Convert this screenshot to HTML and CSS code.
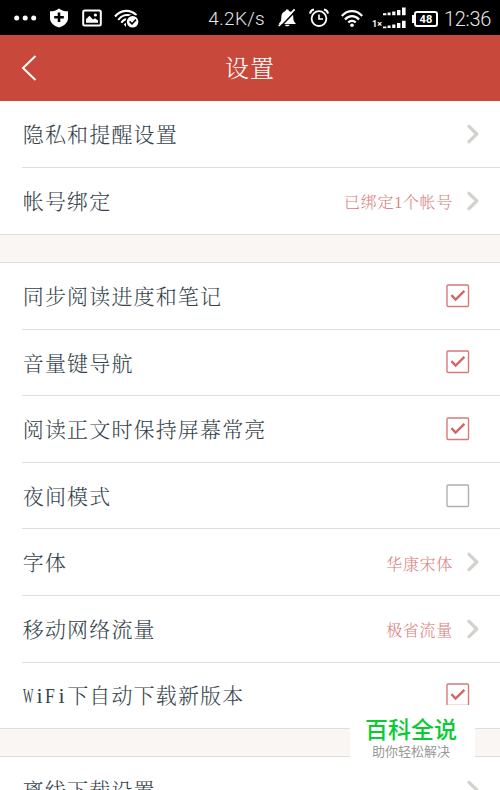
FILE: index.html
```html
<!DOCTYPE html>
<html lang="zh-CN">
<head>
  <meta charset="UTF-8" />
  <title>设置</title>
  <meta name="viewport" content="width=device-width, initial-scale=1.0" />
  <link rel="stylesheet" href="styles.css">
</head>
<body>

  <svg class="symbols" width="0" height="0">
    <symbol id="chevron" viewBox="0 0 12 20">
      <path d="M2 2.3 L9.8 10 L2 17.7" fill="none" stroke="#d3d1cc" stroke-width="3.2" stroke-linecap="round" stroke-linejoin="round"/>
    </symbol>
    <symbol id="tick" viewBox="0 0 24 24">
      <rect x="1" y="1" width="21.5" height="21.5" rx="1" fill="none" stroke="#d57b7b" stroke-width="1.4"/>
      <path d="M5.4 11.2 L9.6 15.5 L18.4 6.8" fill="none" stroke="#cc686b" stroke-width="2.4"/>
    </symbol>
    <symbol id="box" viewBox="0 0 24 24">
      <rect x="1" y="1" width="21.5" height="21.5" rx="1" fill="none" stroke="#b5afa8" stroke-width="1.4"/>
    </symbol>
  </svg>

  <div class="statusbar">
    <div class="status-left">
      <svg width="24" height="20" viewBox="0 0 24 20" fill="#fff">
        <circle cx="3.7" cy="10" r="2.5"/><circle cx="12.2" cy="10" r="2.5"/><circle cx="20.7" cy="10" r="2.5"/>
      </svg>
      <svg width="20" height="20" viewBox="0 0 20 20">
        <path d="M10 .4 C7.5 2.4 4.5 3.2 1 3.2 V10 C1 14.5 4.5 17.8 10 19.6 C15.5 17.8 19 14.5 19 10 V3.2 C15.5 3.2 12.5 2.4 10 .4Z" fill="#fff"/>
        <path d="M10 4.4 V14 M5.2 9.2 H14.8" stroke="#000" stroke-width="2.6"/>
      </svg>
      <svg width="20" height="20" viewBox="0 0 20 20">
        <rect x="1.2" y="2.4" width="17.6" height="15" rx="1.5" fill="none" stroke="#fff" stroke-width="2"/>
        <path d="M4 14.8 V11.2 L7.4 7.8 L11 11.6 L13 10.2 L16 12.6 V14.8Z" fill="#fff"/>
        <circle cx="13.4" cy="7" r="1.6" fill="#fff"/>
      </svg>
      <svg width="25" height="20" viewBox="0 0 25 20">
        <g fill="none" stroke="#fff" stroke-width="2.1">
          <path d="M1 8.5 C7 1.2 16.5 1.2 22.4 7.2"/>
          <path d="M4.2 11.8 C8 7 13.5 6 18 8.2"/>
          <path d="M7.4 14.8 C9 12.3 10.6 11.3 12.6 11.2"/>
        </g>
        <path d="M9.8 16.6 L12 14.6 V19Z" fill="#fff"/>
        <circle cx="18.6" cy="13.8" r="7" fill="#000"/>
        <circle cx="18.6" cy="13.8" r="5.8" fill="#fff"/>
        <path d="M15.6 13.4 L18 15.9 L22 11.6" fill="none" stroke="#000" stroke-width="1.6"/>
      </svg>
    </div>
    <div class="status-right">
      <span class="speed">4.2K/s</span>
      <svg class="bell" width="18" height="20" viewBox="0 0 18 20">
        <path d="M9.2 1.4 C10.4 1.4 10.8 2 10.9 3 C14.4 4 15.3 6.5 15.3 9.5 C15.3 12.5 16 14 17.7 15.4 V16 H1 V15.4 C2.8 14 3.3 12.5 3.3 9.5 C3.3 6.5 4.4 4 7.5 3 C7.6 2 8 1.4 9.2 1.4Z M7 16.8 H11.5 C11.2 18.8 7.4 18.8 7 16.8Z" fill="#fff"/>
        <path d="M2.2 19 L17.9 2.6" stroke="#000" stroke-width="1.6"/>
        <path d="M.8 18 L16.6 1.4" stroke="#fff" stroke-width="1.8"/>
      </svg>
      <svg class="alarm" width="20" height="20" viewBox="0 0 20 20" fill="none" stroke="#fff">
        <circle cx="10" cy="10.6" r="7.4" stroke-width="1.8"/>
        <path d="M10 6.4 V11 H14" stroke-width="1.6"/>
        <path d="M1 5.6 C1.4 3.4 2.8 2 5 1.6 M19 5.6 C18.6 3.4 17.2 2 15 1.6" stroke-width="2"/>
      </svg>
      <svg class="wifi" width="22" height="20" viewBox="0 0 22 20" fill="none" stroke="#fff" stroke-width="2.3">
        <path d="M.8 8 C6.5 1.5 15.5 1.5 21.2 8"/>
        <path d="M4 11.4 C8 6.9 14 6.9 18 11.4"/>
        <path d="M7.3 14.5 C9.5 12.2 12.5 12.2 14.7 14.5"/>
        <circle cx="11" cy="17.3" r="1.8" fill="#fff" stroke="none"/>
      </svg>
      <div class="signal">
        <span>1×</span>
        <svg width="24" height="22" viewBox="0 0 24 22" fill="#fff">
          <path d="M1 6.2h3.4v2h-3.4z M5.6 5.4h3v2.8h-3z M10.2 4.6h3.2v3.6h-3.2z M15 3h3.4v5.2h-3.4z M20 .6h3.6v7.6h-3.6z"/>
          <path d="M1 19.4h3.4v1.8h-3.4z M5.6 18.4h3v2.6h-3z M10.2 17.4h3.2v3.6h-3.2z M15 16h3.4v5h-3.4z M20 13.8h3.6v7.2h-3.6z"/>
        </svg>
      </div>
      <div class="battery"><span>48</span></div>
      <span class="time">12:36</span>
    </div>
  </div>

  <header>
    <svg class="back" width="18" height="28" viewBox="0 0 18 28">
      <path d="M14.5 2 L2 14 L14.5 26" fill="none" stroke="#fff" stroke-width="2"/>
    </svg>
    <h1>设置</h1>
  </header>

  <ul class="group">
    <li><div class="row"><span class="label">隐私和提醒设置</span><svg class="arrow"><use href="#chevron"/></svg></div></li>
    <li><div class="row"><span class="label">帐号绑定</span><span class="value">已绑定<i>1</i>个帐号</span><svg class="arrow"><use href="#chevron"/></svg></div></li>
  </ul>

  <ul class="group">
    <li><div class="row"><span class="label">同步阅读进度和笔记</span><svg class="check"><use href="#tick"/></svg></div></li>
    <li><div class="row"><span class="label">音量键导航</span><svg class="check"><use href="#tick"/></svg></div></li>
    <li><div class="row"><span class="label">阅读正文时保持屏幕常亮</span><svg class="check"><use href="#tick"/></svg></div></li>
    <li><div class="row"><span class="label">夜间模式</span><svg class="check"><use href="#box"/></svg></div></li>
    <li><div class="row"><span class="label">字体</span><span class="value">华康宋体</span><svg class="arrow"><use href="#chevron"/></svg></div></li>
    <li><div class="row"><span class="label">移动网络流量</span><span class="value">极省流量</span><svg class="arrow"><use href="#chevron"/></svg></div></li>
    <li><div class="row"><span class="label"><span class="latin"><b class="w">W</b><b>i</b><b class="f">F</b><b>i</b></span>下自动下载新版本</span><svg class="check"><use href="#tick"/></svg></div></li>
  </ul>

  <ul class="group">
    <li><div class="row"><span class="label">离线下载设置</span><svg class="arrow"><use href="#chevron"/></svg></div></li>
  </ul>

  <div class="badge">
    <strong>百科全说</strong>
    <span>助你轻松解决</span>
  </div>

</body>
</html>
```

FILE: styles.css
```css
* {
  box-sizing: border-box;
}
html {
  height: 790px;
  overflow: hidden;
}
body {
  margin: 0;
  height: 790px;
  overflow: hidden;
  position: relative;
  background: #faf6f3;
  color: #35434a;
  font-family: "Noto Serif CJK SC", "Noto Sans CJK SC", sans-serif;
  font-weight: 300;
}
svg {
  display: block;
  flex: none;
}
.symbols {
  position: absolute;
}

/* status bar */
.statusbar {
  display: flex;
  justify-content: space-between;
  height: 35px;
  padding: 0 9px 0 13px;
  background: #000;
  color: #e6e6e6;
  font-family: Roboto, sans-serif;
}
.status-left, .status-right {
  display: flex;
  align-items: center;
}
.status-left {
  gap: 12px;
}
.status-left svg:nth-child(2) {
  margin-left: -0.5px;
}
.status-left svg:nth-child(3) {
  margin-left: 1px;
}
.speed {
  font-size: 19px;
  letter-spacing: 0.3px;
  padding-top: 2px;
}
.bell {
  margin-left: 13px;
}
.alarm {
  margin-left: 13px;
}
.wifi {
  margin-left: 12px;
}
.signal {
  display: flex;
  align-items: flex-end;
  margin-left: 9px;
  color: #fff;
  font-size: 9px;
  font-weight: bold;
  line-height: 9px;
}
.battery {
  display: flex;
  align-items: center;
  justify-content: center;
  width: 24px;
  height: 16px;
  margin: 3px 6px 0 8px;
  border: 2px solid #fff;
  border-radius: 3px;
  color: #fff;
  font-size: 11px;
  font-weight: bold;
  position: relative;
}
.battery::before {
  content: "";
  position: absolute;
  left: -4px;
  top: 2px;
  width: 2px;
  height: 8px;
  background: #fff;
}
.time {
  font-size: 20px;
  letter-spacing: -0.3px;
  padding-top: 3px;
}

/* title bar */
header {
  display: grid;
  grid-template-columns: 60px 1fr 60px;
  align-items: center;
  height: 66px;
  background: #c8493b;
  color: #fff;
}
.back {
  margin-left: 21px;
}
h1 {
  margin: -2px 0 0;
  text-align: center;
  font-size: 24px;
  font-weight: 300;
  line-height: 32px;
  letter-spacing: 1px;
}

/* settings list */
.group {
  list-style: none;
  margin: 0 0 27px;
  padding: 0;
  background: #fff;
  border-top: 1px solid #dedede;
  border-bottom: 1px solid #dedede;
}
header + .group {
  border-top: none;
}
li {
  padding-left: 22px;
}
.row {
  display: flex;
  align-items: center;
  height: 66.65px;
  padding-right: 21px;
  border-bottom: 1px solid #dedede;
}
li:first-child .row {
  height: 66.5px;
}
li:last-child .row {
  height: 65.3px;
  border-bottom: none;
}
header + .group li .row {
  height: 67px;
}
header + .group li:last-child .row {
  height: 66px;
}
.label {
  flex: 1;
  font-size: 21px;
  letter-spacing: 1.15px;
  line-height: 30px;
  padding: 0 0 1.6px 0.8px;
}
.latin {
  display: inline-flex;
  font-family: "Liberation Serif", serif;
  font-size: 22px;
  letter-spacing: 0;
}
.latin b {
  width: 11.1px;
  text-align: center;
  font-weight: normal;
}
.latin .w {
  text-align: left;
  transform: scaleX(0.5);
  transform-origin: left;
}
.latin .f {
  text-align: left;
  transform: scaleX(0.8);
  transform-origin: left;
}
.value {
  color: #d98282;
  font-size: 16px;
  letter-spacing: 0.7px;
  margin-right: 14px;
  padding-top: 1.6px;
}
.value i {
  font-style: normal;
  font-family: "Liberation Serif", serif;
}
.arrow {
  width: 12px;
  height: 20px;
}
.check {
  width: 24px;
  height: 24px;
  margin-right: 9px;
}

/* corner badge */
.badge {
  position: absolute;
  left: 350px;
  top: 705px;
  width: 125px;
  height: 60px;
  background: #fff;
  display: flex;
  flex-direction: column;
  align-items: center;
  padding: 8px 3px 0 0;
  font-family: "Noto Sans CJK SC", sans-serif;
}
.badge strong {
  color: #0bcb35;
  font-size: 23px;
  line-height: 30px;
  font-weight: 500;
}
.badge span {
  color: #999;
  font-size: 13px;
  line-height: 15px;
  font-weight: 400;
}
```
